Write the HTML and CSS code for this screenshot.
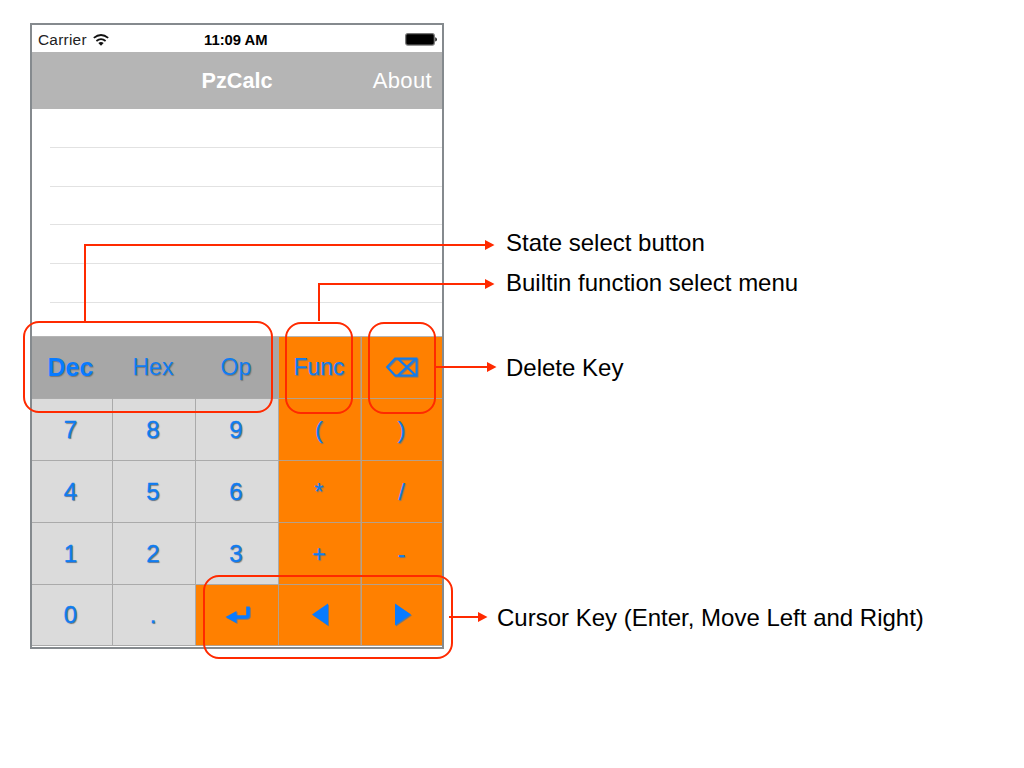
FILE: index.html
```html
<!DOCTYPE html>
<html lang="en">
<head>
<meta charset="utf-8">
<title>PzCalc</title>
<link rel="stylesheet" href="styles.css">
</head>
<body>
<main class="stage">
  <section class="phone">
    <div class="status">
      <span class="carrier">Carrier</span>
      <svg class="wifi" width="16" height="12" viewBox="0 0 16 12" fill="none" stroke="#111" stroke-width="1.8"><path d="M.8 3.9Q8-1.9 15.2 3.9M3.4 7Q8 3.3 12.6 7"/><path d="M5.3 8.9Q8 7 10.7 8.9L8 11.7Z" fill="#111" stroke="none"/></svg>
      <span class="time">11:09 AM</span>
      <svg class="battery" width="32" height="13" viewBox="0 0 32 13"><rect x=".7" y=".7" width="28.6" height="11.4" rx="2" fill="#000" stroke="#777" stroke-width="1.2"/><path d="M30.3 4.2Q31.8 4.6 31.8 6.4T30.3 8.6Z"/></svg>
    </div>
    <header class="nav"><h1 class="title">PzCalc</h1><span class="about">About</span></header>
    <div class="rows"><div class="row"></div><div class="row"></div><div class="row"></div><div class="row"></div><div class="row"></div></div>
    <div class="keypad">
      <div class="key state selected"><span>Dec</span></div><div class="key state"><span>Hex</span></div><div class="key state"><span>Op</span></div><div class="key op word"><span>Func</span></div>
      <div class="key op"><svg class="glyph" width="34" height="22" viewBox="0 0 34 22" fill="none" stroke="#107cf0" stroke-width="1.9"><path d="M10 1.500H31.500V18.500H10L2 10ZM13 1.800L30.500 18.200M30.500 1.800L13 18.200"/></svg></div>
      <div class="key"><span>7</span></div><div class="key"><span>8</span></div><div class="key"><span>9</span></div><div class="key op"><span>(</span></div><div class="key op"><span>)</span></div>
      <div class="key"><span>4</span></div><div class="key"><span>5</span></div><div class="key"><span>6</span></div><div class="key op"><span>*</span></div><div class="key op"><span>/</span></div>
      <div class="key"><span>1</span></div><div class="key"><span>2</span></div><div class="key"><span>3</span></div><div class="key op"><span>+</span></div><div class="key op"><span>-</span></div>
      <div class="key"><span>0</span></div><div class="key"><span>.</span></div>
      <div class="key op enter"><svg class="glyph" width="26" height="20" viewBox="0 0 26 20"><path d="M.5 12L11.5 6V18Z" fill="#087bff"/><path d="M10 12H21Q23 12 23 10V1.500" fill="none" stroke="#087bff" stroke-width="3.600"/></svg></div>
      <div class="key op"><svg class="glyph" width="18" height="24" viewBox="0 0 18 24"><path d="M1 11.500L17 .5V22.500Z" fill="#087bff"/></svg></div>
      <div class="key op right"><svg class="glyph" width="18" height="24" viewBox="0 0 18 24"><path d="M17 11.500L1 .5V22.500Z" fill="#087bff"/></svg></div>
    </div>
  </section>
  <svg class="callouts" width="1024" height="768" viewBox="0 0 1024 768">
    <g fill="none" stroke="#ff2a00" stroke-width="2">
      <rect x="24" y="322" width="248" height="90" rx="15"/>
      <rect x="286" y="323" width="66" height="90" rx="15"/>
      <rect x="369" y="323" width="66" height="90" rx="15"/>
      <rect x="204" y="576" width="248" height="82" rx="15"/>
      <path d="M85 321V245H486M319 321V284H486M436 367H488M449 617H479"/>
    </g>
    <path fill="#ff2a00" d="M485 240L494.500 245L485 250ZM485 279L494.500 284L485 289ZM487 362L496.500 367L487 372ZM478 612L487.500 617L478 622Z"/>
  </svg>
  <p class="label label-state">State select button</p>
  <p class="label label-func">Builtin function select menu</p>
  <p class="label label-delete">Delete Key</p>
  <p class="label label-cursor">Cursor Key (Enter, Move Left and Right)</p>
</main>
</body>
</html>
```

FILE: styles.css
```css
body { margin: 0; background: #fff; font-family: "Liberation Sans", Arial, sans-serif; }
.stage { position: relative; width: 1024px; height: 768px; overflow: hidden; padding: 23px 0 0 30px; box-sizing: border-box; }
.phone { width: 414px; height: 626px; box-sizing: border-box; border: 2px solid #858a8e; background: #fff; display: flex; flex-direction: column; }
.status { height: 27px; box-sizing: border-box; padding: 2px 5px 0 6px; display: grid; grid-template-columns: 55px 112px 1fr auto; align-items: center; font-size: 15.4px; color: #222; white-space: nowrap; }
.carrier { letter-spacing: .25px; }
.time { font-weight: bold; font-size: 14.8px; color: #000; margin-left: -1px; }
.nav { height: 57px; background: #b5b5b5; color: #fff; display: grid; grid-template-columns: 1fr auto 1fr; align-items: center; font-size: 22px; }
.title { grid-column: 2; margin: 0; font-size: 21.6px; }
.about { justify-self: end; margin-right: 10px; letter-spacing: .35px; }
.rows { height: 227px; display: flex; flex-direction: column; padding-left: 18px; box-sizing: border-box; }
.row { height: 38.75px; flex: none; box-sizing: border-box; border-bottom: 1.5px solid #e2e2e2; }
.keypad { display: grid; grid-template-columns: 81px 83px 83px 83px 80px; grid-template-rows: 62px 62px 62px 62px 61px; border-top: 1px solid #b5b5b5; }
.key { box-sizing: border-box; border-right: 1px solid #aaa; border-bottom: 1px solid #aaa; background: #dbdbdb; display: flex; align-items: center; justify-content: center; color: #107cf0; font-size: 24px; line-height: 1; -webkit-text-stroke: .35px #107cf0; text-shadow: 1px 1px 1px #777; }
.key span { margin-right: 2px; }
.key:first-child span, .key:nth-child(5n+1) span { margin-right: 3px; }
.key:nth-child(5n) { border-right: 0; }
.key:nth-child(5n) span { margin-right: 1px; }
.key.state { font-size: 23.2px; background: #a7a7a7; border-right-color: #a7a7a7; -webkit-text-stroke: 0; }
.key.selected { font-size: 25px; font-weight: bold; color: #087bff; }
.key.op { background: #ff8000; border-color: #b5a08a; -webkit-text-stroke: 0; }
.key:nth-child(5n+4) { box-shadow: inset -1px 0 #d49250; }
.key.word { font-size: 23px; }
.key.enter { padding-left: 2px; }
.key.right { padding-left: 2px; }
.glyph { filter: drop-shadow(1px 1px .5px #777); }
.callouts { position: absolute; left: 0; top: 0; }
.label { position: absolute; margin: 0; font-size: 24px; line-height: 28px; white-space: nowrap; color: #000; }
.label-state { left: 506px; top: 229px; }
.label-func { left: 506px; top: 269px; }
.label-delete { left: 506px; top: 354px; }
.label-cursor { left: 497px; top: 604px; }
```
